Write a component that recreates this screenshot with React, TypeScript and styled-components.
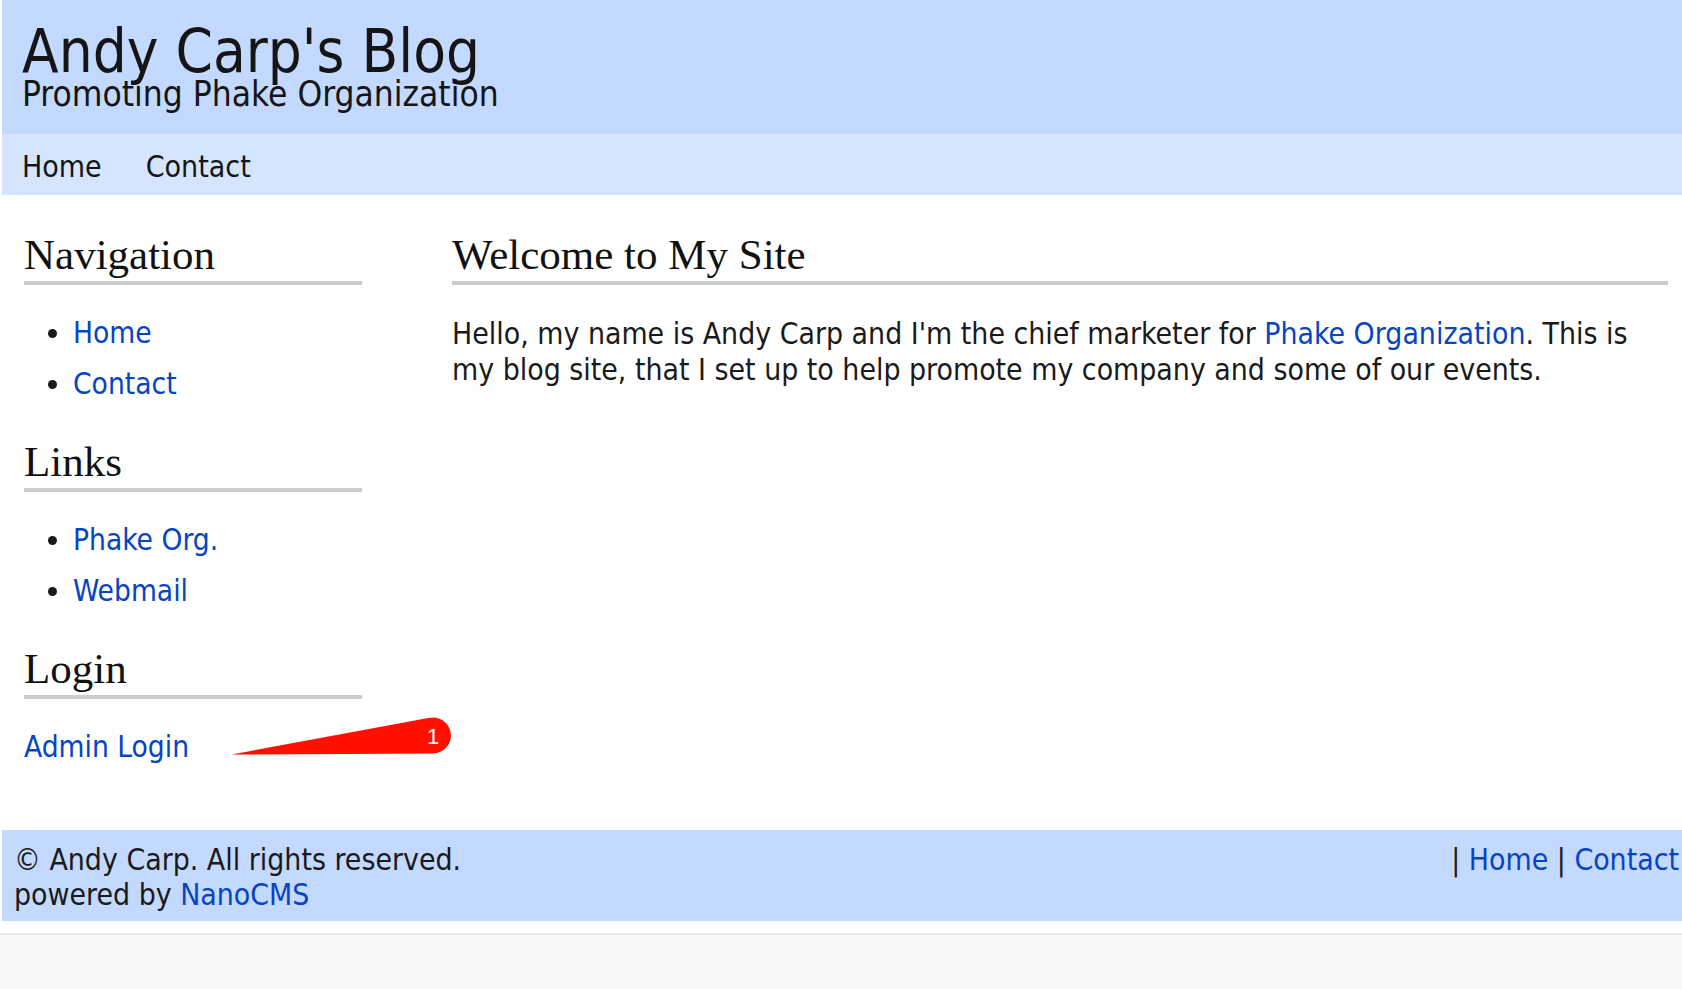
import React from "react";
import styled, { createGlobalStyle } from "styled-components";

const sans = `"DejaVu Sans Condensed", "DejaVu Sans", Verdana, sans-serif`;
const serif = `"Liberation Serif", "Times New Roman", serif`;

const GlobalStyle = createGlobalStyle`
  html, body {
    margin: 0;
    padding: 0;
    background: #ffffff;
  }
  body {
    font-family: ${sans};
    font-stretch: condensed;
    color: #1a1a1a;
  }
  #root {
    min-height: 100vh;
    display: flex;
    flex-direction: column;
  }
`;

const Page = styled.div`
  position: relative;
  padding-left: 2px;
  padding-bottom: 12px;
  background: #ffffff;
`;

const Header = styled.header`
  box-sizing: border-box;
  height: 134px;
  padding: 25px 20px 0 20px;
  background: #c3d9ff;
`;

const Title = styled.h1`
  margin: 0;
  font-size: 59.6px;
  line-height: 54px;
  font-weight: normal;
  color: #151515;
`;

const Subtitle = styled.div`
  font-size: 35px;
  line-height: 30px;
  color: #151515;
`;

const TopNav = styled.nav`
  box-sizing: border-box;
  height: 61px;
  padding: 16px 20px 0 20px;
  background: #d6e5ff;
  display: flex;
  gap: 44px;
`;

const TopNavLink = styled.a`
  font-size: 30px;
  line-height: 34px;
  color: #151515;
  text-decoration: none;
`;

const Content = styled.div`
  display: grid;
  grid-template-columns: 338px 1fr;
  column-gap: 90px;
  padding: 38px 14px 64px 22px;
`;

const Sidebar = styled.aside`
  display: flex;
  flex-direction: column;
`;

const Main = styled.main`
  display: flex;
  flex-direction: column;
`;

const Heading = styled.h2`
  margin: 0;
  font-family: ${serif};
  font-stretch: normal;
  font-weight: normal;
  font-size: 43px;
  line-height: 43px;
  padding-bottom: 5px;
  border-bottom: 4px solid #cccccc;
  color: #111111;
`;

const List = styled.ul`
  margin: 23px 0 30px 0;
  padding-left: 49px;
  font-size: 29.6px;
  line-height: 51px;
  li::marker {
    color: #1a1a1a;
  }
`;

const Link = styled.a`
  color: #0644c4;
  text-decoration: none;
`;

const SideText = styled.p`
  margin: 31px 0 0 0;
  font-size: 29.6px;
  line-height: 35.5px;
`;

const Paragraph = styled.p`
  margin: 31px 0 0 0;
  font-size: 29.9px;
  line-height: 35.5px;
  color: #1a1a1a;
`;

const Footer = styled.footer`
  display: flex;
  justify-content: space-between;
  align-items: flex-start;
  padding: 12px 3px 9px 12px;
  background: #c3d9ff;
  font-size: 29.9px;
  line-height: 35px;
  color: #1a1a1a;
`;

const FooterLeft = styled.div`
  display: flex;
  flex-direction: column;
`;

const FooterNav = styled.div`
  white-space: pre;
`;

const Below = styled.div`
  flex: 1;
  border-top: 2px solid #ececec;
  background: #f8f8f8;
`;

const Callout = styled.svg`
  position: absolute;
  left: 228px;
  top: 714px;
  width: 228px;
  height: 44px;
  overflow: visible;
`;

export default function App() {
  return (
    <>
      <GlobalStyle />
      <Page>
        <Header>
          <Title>Andy Carp's Blog</Title>
          <Subtitle>Promoting Phake Organization</Subtitle>
        </Header>
        <TopNav>
          <TopNavLink href="#">Home</TopNavLink>
          <TopNavLink href="#">Contact</TopNavLink>
        </TopNav>
        <Content>
          <Sidebar>
            <Heading>Navigation</Heading>
            <List>
              <li><Link href="#">Home</Link></li>
              <li><Link href="#">Contact</Link></li>
            </List>
            <Heading>Links</Heading>
            <List>
              <li><Link href="#">Phake Org.</Link></li>
              <li><Link href="#">Webmail</Link></li>
            </List>
            <Heading>Login</Heading>
            <SideText><Link href="#">Admin Login</Link></SideText>
          </Sidebar>
          <Main>
            <Heading>Welcome to My Site</Heading>
            <Paragraph>
              Hello, my name is Andy Carp and I'm the chief marketer for{" "}
              <Link href="#">Phake Organization</Link>. This is my blog site, that I set up
              to help promote my company and some of our events.
            </Paragraph>
          </Main>
        </Content>
        <Footer>
          <FooterLeft>
            <span>© Andy Carp. All rights reserved.</span>
            <span>powered by <Link href="#">NanoCMS</Link></span>
          </FooterLeft>
          <FooterNav>
            | <Link href="#">Home</Link> | <Link href="#">Contact</Link>
          </FooterNav>
        </Footer>
        <Callout viewBox="0 0 228 44">
          <path d="M3.7 40.5 L205 39.5 A18 18 0 1 0 200.3 4.1 Z" fill="#ff1000" />
          <text
            x="205"
            y="30"
            textAnchor="middle"
            fill="#ffffff"
            fontSize="22"
            fontFamily="Liberation Sans, Arial, sans-serif"
          >
            1
          </text>
        </Callout>
      </Page>
      <Below />
    </>
  );
}
